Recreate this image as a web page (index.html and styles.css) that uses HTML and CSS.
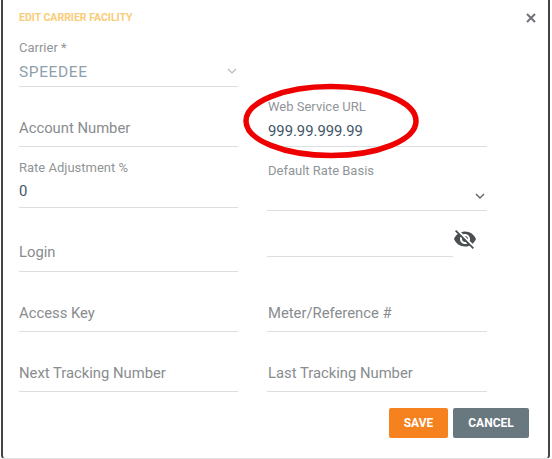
FILE: index.html
```html
<!DOCTYPE html>
<html lang="en">
<head>
  <meta charset="UTF-8" />
  <title>Edit Carrier Facility</title>
  <link rel="stylesheet" href="styles.css">
</head>
<body>
  <div class="dialog">
    <div class="header">
      <h1>EDIT CARRIER FACILITY</h1>
      <svg class="close" width="10" height="10" viewBox="0 0 10 10"><path d="M1 1l8 8M9 1l-8 8" stroke="#6f7377" stroke-width="2" fill="none"/></svg>
    </div>
    <div class="columns">
      <div class="col">
        <div class="field carrier">
          <label>Carrier *</label>
          <div class="value muted">SPEEDEE<svg class="chev" width="10" height="6" viewBox="0 0 10 6"><path d="M1 1l4 4 4-4" stroke="#b4b8bb" stroke-width="1.2" fill="none"/></svg></div>
        </div>
        <div class="field h60"><div class="ph">Account Number</div></div>
        <div class="field h61 rate">
          <label>Rate Adjustment %</label>
          <div class="value">0</div>
        </div>
        <div class="field h64 login"><div class="ph">Login</div></div>
        <div class="field h60"><div class="ph">Access Key</div></div>
        <div class="field h60"><div class="ph">Next Tracking Number</div></div>
      </div>
      <div class="col right">
        <div class="field url">
          <label>Web Service URL</label>
          <div class="value">999.99.999.99</div>
        </div>
        <div class="field h64 basis">
          <label>Default Rate Basis</label>
          <div class="value"><svg class="chev" width="10" height="6" viewBox="0 0 10 6"><path d="M1 1l4 4 4-4" stroke="#5f6368" stroke-width="1.4" fill="none"/></svg></div>
        </div>
        <div class="pw-row">
          <div class="field pw"></div>
          <svg class="eye" width="24" height="24" viewBox="0 0 24 24"><path fill="#4a4f52" d="M12 7c2.76 0 5 2.24 5 5 0 .65-.13 1.26-.36 1.83l2.92 2.92c1.51-1.26 2.7-2.89 3.43-4.75-1.73-4.39-6-7.5-11-7.5-1.4 0-2.74.25-3.98.7l2.16 2.16C10.74 7.13 11.35 7 12 7zM2 4.27l2.28 2.28.46.46C3.08 8.3 1.78 10.02 1 12c1.73 4.39 6 7.5 11 7.5 1.55 0 3.03-.3 4.38-.84l.42.42L19.73 22 21 20.73 3.27 3 2 4.27zM7.53 9.8l1.55 1.55c-.05.21-.08.43-.08.65 0 1.66 1.34 3 3 3 .22 0 .44-.03.65-.08l1.55 1.55c-.67.33-1.41.53-2.2.53-2.76 0-5-2.24-5-5 0-.79.2-1.53.53-2.2zm4.31-.78l3.15 3.15.02-.16c0-1.66-1.34-3-3-3l-.17.01z"/></svg>
        </div>
        <div class="field h75"><div class="ph">Meter/Reference #</div></div>
        <div class="field h60"><div class="ph">Last Tracking Number</div></div>
      </div>
    </div>
    <div class="actions">
      <button class="btn save">SAVE</button>
      <button class="btn cancel">CANCEL</button>
    </div>
    <svg class="circle" width="186" height="84" viewBox="0 0 186 84"><ellipse cx="93" cy="42" rx="85" ry="34.5" fill="none" stroke="#ee0000" stroke-width="5.5"/></svg>
  </div>
</body>
</html>
```

FILE: styles.css
```css
html, body {
  margin: 0;
  padding: 0;
}
body {
  font-family: Roboto, "Liberation Sans", sans-serif;
  background-color: #fff;
  color: #3f5566;
}
.dialog {
  position: relative;
  box-sizing: border-box;
  width: 549px;
  height: 459px;
  margin-left: 1px;
  padding: 0 61px 0 16px;
  border-left: 2px solid #444;
  border-right: 2px solid #444;
  border-bottom: 1px solid #ddd;
  border-bottom-left-radius: 4px;
  border-bottom-right-radius: 4px;
  background-color: #fff;
}
.header {
  height: 33px;
  position: relative;
}
h1 {
  margin: 0;
  padding-top: 12px;
  font-size: 10.5px;
  line-height: 12px;
  font-weight: 700;
  color: #f8cd76;
}
.close {
  position: absolute;
  left: 507px;
  top: 13px;
}
.columns {
  display: grid;
  grid-template-columns: 219px 220px;
  column-gap: 29px;
}
.field {
  position: relative;
  box-sizing: border-box;
  border-bottom: 1px solid #dcdfe1;
}
.carrier { height: 54px; }
.url { height: 114px; padding-top: 66px; }
.h60 { height: 60px; }
.h61 { height: 61px; }
.h64 { height: 64px; }
.h75 { height: 75px; }
label {
  display: block;
  padding-top: 7px;
  font-size: 13px;
  line-height: 15px;
  color: #919598;
}
.url label { padding-top: 0; }
.rate label { padding-top: 13px; }
.basis label { padding-top: 16px; }
.right label, .right .value { margin-left: 1px; }
.value {
  position: relative;
  height: 19px;
  margin-top: 7px;
  font-size: 14.8px;
  line-height: 19px;
}
.url .value { margin-top: 8px; }
.muted {
  margin-top: 8px;
  font-size: 15.5px;
  color: #8fa0ac;
  letter-spacing: 0.6px;
}
.chev {
  position: absolute;
  right: 1px;
  top: 5px;
}
.basis .chev {
  right: 2px;
  top: 8px;
}
.ph {
  position: absolute;
  left: 0;
  bottom: 8px;
  font-size: 14.8px;
  line-height: 19px;
  color: #888c8f;
}
.right .ph { left: 1px; }
.login .ph { bottom: 9px; }
.pw-row {
  display: flex;
  align-items: flex-start;
  height: 46px;
}
.pw {
  width: 186px;
  height: 46px;
}
.eye {
  margin: 16px 0 0 0;
}
.actions {
  display: flex;
  justify-content: flex-end;
  gap: 5px;
  margin: 16px -42px 0 0;
}
.btn {
  height: 30px;
  border: 0;
  border-radius: 2px;
  font-family: inherit;
  font-size: 12px;
  font-weight: 700;
  color: #fff;
}
.save {
  width: 59px;
  background-color: #f5821f;
}
.cancel {
  width: 76px;
  background-color: #69777f;
}
.circle {
  position: absolute;
  left: 235px;
  top: 79px;
}
```
